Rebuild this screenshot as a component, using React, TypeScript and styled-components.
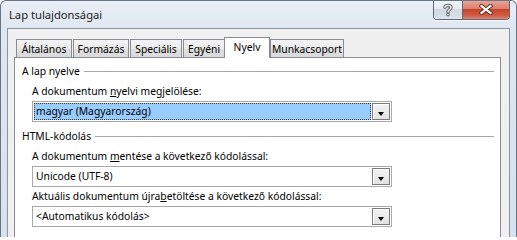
import styled, { createGlobalStyle } from "styled-components";

const Global = createGlobalStyle`
  body {
    margin: 0;
    background: #ffffff;
    font-family: "Noto Sans", "Open Sans", sans-serif;
    font-size: 10.3px;
    color: #000;
  }
`;

const Window = styled.div`
  box-sizing: border-box;
  width: 517px;
  height: 237px;
  overflow: hidden;
  border: 1px solid #66768a;
  border-bottom: none;
  border-radius: 6px 6px 0 0;
  background: linear-gradient(180deg, #eaeff5 0px, #dfe7f0 27px, #d8e2ec 100%);
  display: flex;
  flex-direction: column;
`;

const TitleBar = styled.div`
  height: 27px;
  display: flex;
  justify-content: space-between;
  align-items: flex-start;
  padding: 0 6px 0 8px;
  flex-shrink: 0;
`;

const Title = styled.div`
  margin-top: 7px;
  line-height: 14px;
  font-size: 11.2px;
  color: #1b1b1b;
`;

const CaptionButtons = styled.div`
  display: flex;
  margin-top: -1px;
  border: 1px solid #5e6a7b;
  border-top: none;
  border-radius: 0 0 4px 4px;
  overflow: hidden;
  box-shadow: 0 1px 0 rgba(255, 255, 255, 0.7);
`;

const CaptionButton = styled.div<{ $w: number; $close?: boolean }>`
  width: ${(p) => p.$w}px;
  height: 19px;
  display: flex;
  align-items: center;
  justify-content: center;
  background: ${(p) =>
    p.$close
      ? "linear-gradient(180deg, #e9a99c 0%, #dc7f6b 45%, #c6442b 50%, #cf5a3f 80%, #e0886f 100%)"
      : "linear-gradient(180deg, #f4f6f8 0%, #e6eaef 45%, #d3d9e1 50%, #d6dce4 80%, #e1e6ec 100%)"};
  & + & {
    border-left: 1px solid #5e6a7b;
  }
`;

const Body = styled.div`
  margin: 0 6px;
  flex: 1;
  border: 1px solid #8895a6;
  border-bottom: none;
  background: #f0f0f0;
  padding: 8px 8px 0 6px;
`;

const TabStrip = styled.div`
  height: 20px;
  display: flex;
  align-items: flex-end;
  margin-left: 2px;
  position: relative;
  z-index: 1;
`;

const Tab = styled.div<{ $w: number; $active?: boolean }>`
  box-sizing: border-box;
  width: ${(p) => p.$w}px;
  height: ${(p) => (p.$active ? 21 : 18)}px;
  margin-right: ${(p) => (p.$active ? 0 : 1)}px;
  margin-left: ${(p) => (p.$active ? -2 : 0)}px;
  margin-bottom: ${(p) => (p.$active ? -1 : 0)}px;
  border: 1px solid #898c95;
  border-bottom: none;
  background: ${(p) =>
    p.$active ? "#ffffff" : "linear-gradient(180deg, #f3f3f3 0%, #ebebeb 50%, #e0e0e0 51%, #dadada 100%)"};
  display: flex;
  align-items: center;
  justify-content: center;
  padding-bottom: ${(p) => (p.$active ? 3 : 0)}px;
  line-height: 14px;
  white-space: nowrap;
  position: relative;
  z-index: ${(p) => (p.$active ? 2 : 1)};
`;

const Panel = styled.div`
  height: 200px;
  border: 1px solid #898c95;
  background: #ffffff;
  padding: 6px 6px 0 7px;
`;

const Group = styled.section`
  & + & {
    margin-top: 7px;
  }
`;

const GroupHeader = styled.div`
  height: 14px;
  line-height: 14px;
  display: flex;
  align-items: center;
  gap: 4px;
  margin-bottom: 6px;
  white-space: nowrap;
  &::after {
    content: "";
    flex: 1;
    height: 1px;
    background: #a7a7a7;
  }
`;

const GroupBody = styled.div`
  padding-left: 10px;
`;

const Field = styled.div`
  & + & {
    margin-top: 2px;
  }
`;

const Label = styled.div`
  height: 14px;
  line-height: 14px;
  margin-bottom: 3px;
  white-space: nowrap;
  u {
    text-decoration-thickness: 1px;
    text-underline-offset: 1px;
  }
`;

const Select = styled.div`
  box-sizing: border-box;
  width: 360px;
  height: 21px;
  border: 1px solid #a9a9a9;
  padding: 1px;
  display: flex;
  gap: 1px;
  background: #ffffff;
`;

const Value = styled.div<{ $focused?: boolean }>`
  flex: 1;
  box-sizing: border-box;
  height: 17px;
  line-height: 15px;
  padding-left: 1px;
  border: 1px ${(p) => (p.$focused ? "dotted #3d3526" : "solid transparent")};
  background: ${(p) => (p.$focused ? "#99ccff" : "transparent")};
  white-space: nowrap;
`;

const ArrowButton = styled.div`
  box-sizing: border-box;
  width: 18px;
  height: 17px;
  border: 1px solid #7c7c7c;
  box-shadow: inset 1px 1px 0 #ffffff;
  background: linear-gradient(180deg, #f2f2f2 0%, #e2e2e2 100%);
  display: flex;
  align-items: center;
  justify-content: center;
  padding-top: 4px;
  &::before {
    content: "";
    border-left: 3.5px solid transparent;
    border-right: 3.5px solid transparent;
    border-top: 4px solid #000;
  }
`;

function HelpIcon() {
  return (
    <svg width="10" height="14" viewBox="0 0 10 14">
      <path
        d="M2 4.2 C2 1.8 8 1.8 8 4.4 C8 6.4 5 6.6 5 8.8"
        fill="none"
        stroke="#5b6470"
        strokeWidth="3.4"
        strokeLinecap="round"
      />
      <circle cx="5" cy="11.6" r="1.8" fill="#5b6470" />
      <path
        d="M2 4.2 C2 1.8 8 1.8 8 4.4 C8 6.4 5 6.6 5 8.8"
        fill="none"
        stroke="#ffffff"
        strokeWidth="1.4"
        strokeLinecap="round"
      />
      <circle cx="5" cy="11.6" r="0.8" fill="#ffffff" />
    </svg>
  );
}

function CloseIcon() {
  return (
    <svg width="14" height="11" viewBox="0 0 14 11">
      <path d="M2.5 2 L11.5 9 M11.5 2 L2.5 9" stroke="#5a2a22" strokeWidth="4" strokeLinecap="square" />
      <path d="M2.5 2 L11.5 9 M11.5 2 L2.5 9" stroke="#ffffff" strokeWidth="2.2" strokeLinecap="square" />
    </svg>
  );
}

const tabs = [
  { label: "Általános", w: 56 },
  { label: "Formázás", w: 56 },
  { label: "Speciális", w: 52 },
  { label: "Egyéni", w: 42 },
  { label: "Nyelv", w: 46, active: true },
  { label: "Munkacsoport", w: 74 },
];

export default function App() {
  return (
    <>
      <Global />
      <Window>
        <TitleBar>
          <Title>Lap tulajdonságai</Title>
          <CaptionButtons>
            <CaptionButton $w={28}>
              <HelpIcon />
            </CaptionButton>
            <CaptionButton $w={46} $close>
              <CloseIcon />
            </CaptionButton>
          </CaptionButtons>
        </TitleBar>
        <Body>
          <TabStrip>
            {tabs.map((t) => (
              <Tab key={t.label} $w={t.w} $active={t.active}>
                {t.label}
              </Tab>
            ))}
          </TabStrip>
          <Panel>
            <Group>
              <GroupHeader>A lap nyelve</GroupHeader>
              <GroupBody>
                <Field>
                  <Label>
                    A dokumentum <u>n</u>yelvi megjelölése:
                  </Label>
                  <Select>
                    <Value $focused>magyar (Magyarország)</Value>
                    <ArrowButton />
                  </Select>
                </Field>
              </GroupBody>
            </Group>
            <Group>
              <GroupHeader>HTML-kódolás</GroupHeader>
              <GroupBody>
                <Field>
                  <Label>
                    A dokumentum <u>m</u>entése a következő kódolással:
                  </Label>
                  <Select>
                    <Value>Unicode (UTF-8)</Value>
                    <ArrowButton />
                  </Select>
                </Field>
                <Field>
                  <Label>
                    Aktuális dokumentum újra<u>b</u>etöltése a következő kódolással:
                  </Label>
                  <Select>
                    <Value>&lt;Automatikus kódolás&gt;</Value>
                    <ArrowButton />
                  </Select>
                </Field>
              </GroupBody>
            </Group>
          </Panel>
        </Body>
      </Window>
    </>
  );
}
